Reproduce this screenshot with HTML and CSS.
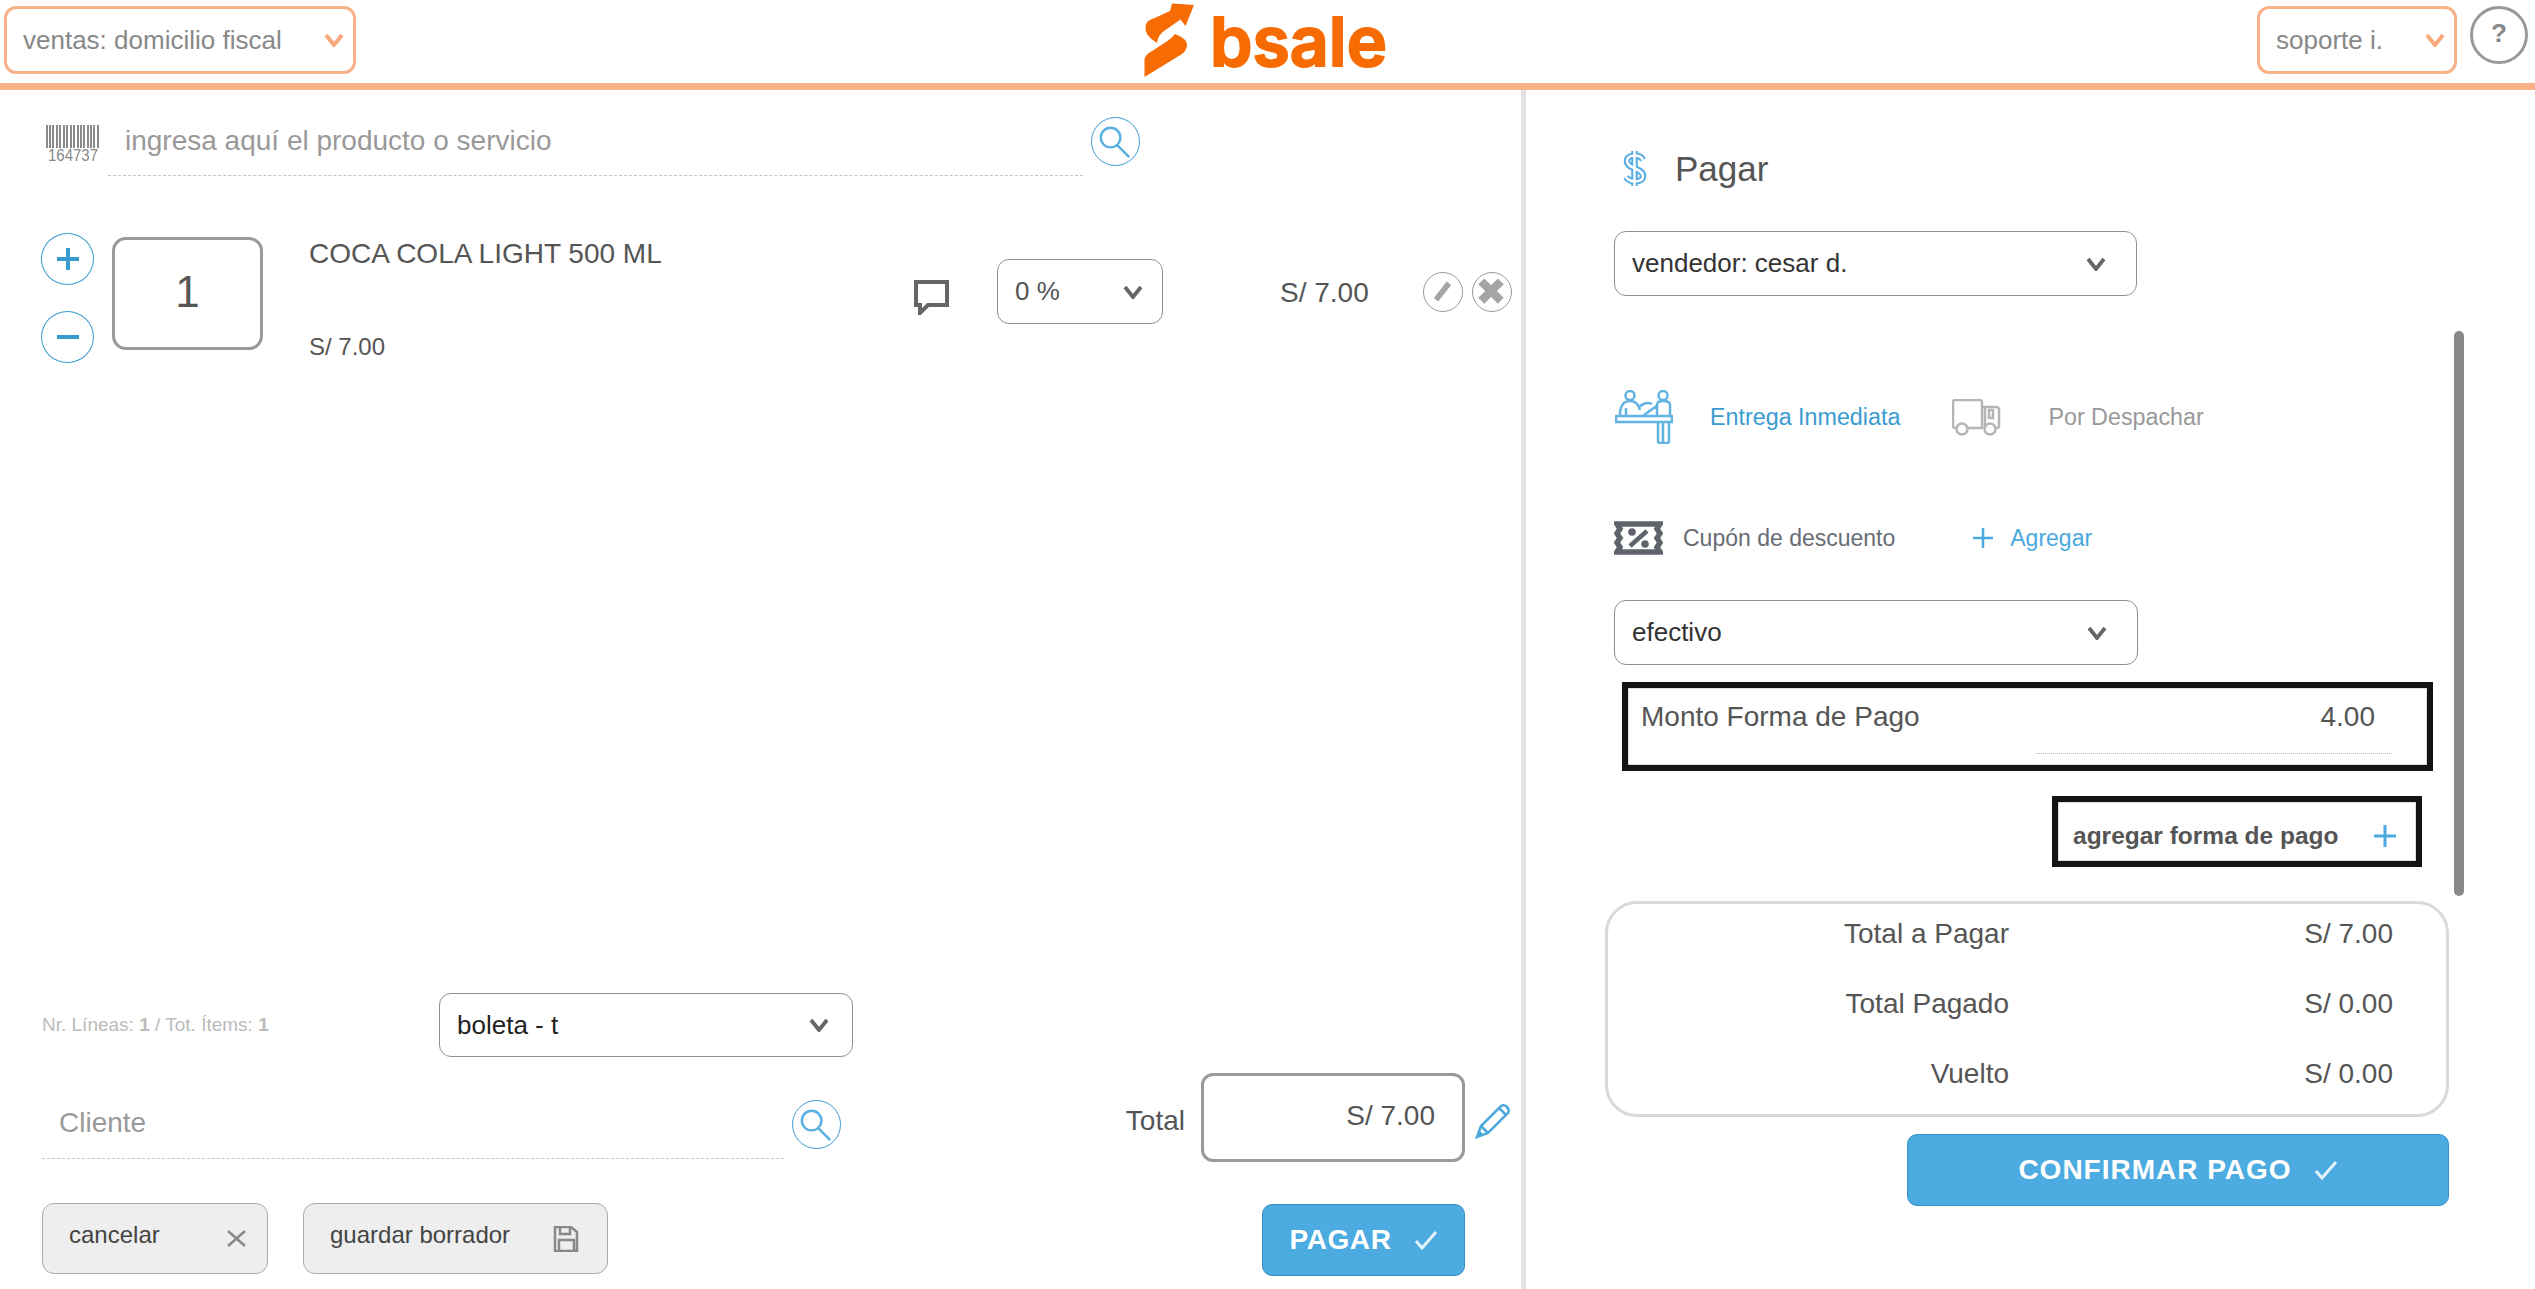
FILE: index.html
```html
<!DOCTYPE html>
<html lang="es">
<head>
    <meta charset="UTF-8">
    <title>bsale - punto de venta</title>
    <link rel="stylesheet" href="styles.css">
</head>
<body>
    <header class="topbar">
        <div class="topbar-left">
            <div class="select select-orange select-sucursal">
                <span>ventas: domicilio fiscal</span>
                <svg class="chevron" viewBox="0 0 20 14"><path d="M2 2l8 10 8-10"/></svg>
            </div>
        </div>
        <div class="logo">
            <svg class="logo-mark" viewBox="0 0 54 78"><path d="M6 20L28 10 30 2.500 52 4 43.500 25 38.500 18.500 22 30Q16 34 15 42 2 34 3.500 26 4 22 6 20Z"/><path d="M33 33Q46 38 45 45 44 50 40 53L2.500 76V58Q3 54 10 50L24 41Q30 37 33 33Z"/></svg>
            <span class="logo-text">bsale</span>
        </div>
        <div class="topbar-right">
            <div class="select select-orange select-soporte">
                <span>soporte i.</span>
                <svg class="chevron" viewBox="0 0 20 14"><path d="M2 2l8 10 8-10"/></svg>
            </div>
            <div class="ayuda">?</div>
        </div>
    </header>

    <main class="main">
        <section class="venta">
            <div class="buscador">
                <svg class="barcode" viewBox="0 0 54 42">
                    <path d="M1 0v23M4 0v23M7 0v23M11 0v23M14 0v23M18 0v23M21 0v23M25 0v23M28 0v23M32 0v23M35 0v23M38 0v23M42 0v23M45 0v23M48 0v23M52 0v23"/>
                    <text x="2" y="36" textLength="50" lengthAdjust="spacingAndGlyphs">164737</text>
                </svg>
                <div class="campo campo-producto">ingresa aquí el producto o servicio</div>
                <div class="btn-lupa">
                    <svg viewBox="0 0 48 48"><circle cx="19" cy="20" r="10"/><path d="M26 28l12 12"/></svg>
                </div>
            </div>

            <div class="item">
                <div class="cantidad-btns">
                    <div class="btn-redondo"><svg viewBox="0 0 24 24"><path d="M12 1v22M1 12h22"/></svg></div>
                    <div class="btn-redondo"><svg viewBox="0 0 24 24"><path d="M1 12h22"/></svg></div>
                </div>
                <div class="cantidad">1</div>
                <div class="item-info">
                    <div class="item-nombre">COCA COLA LIGHT 500 ML</div>
                    <div class="item-precio">S/ 7.00</div>
                </div>
                <svg class="comentario" viewBox="0 0 35 35"><path d="M2 2h31v23H14l-8 8v-8H2z"/></svg>
                <div class="select select-descuento">
                    <span>0 %</span>
                    <svg class="chevron chevron-gris" viewBox="0 0 20 14"><path d="M2 2l8 10 8-10"/></svg>
                </div>
                <div class="item-total">S/ 7.00</div>
                <div class="item-acciones">
                    <div class="btn-accion"><svg viewBox="0 0 40 40"><path class="trazo-lapiz" d="M13 29l14-18"/></svg></div>
                    <div class="btn-accion"><svg viewBox="0 0 40 40"><path class="trazo-x" d="M9 9l21 21M30 9L9 30"/></svg></div>
                </div>
            </div>

            <div class="venta-pie">
                <div class="fila-doc">
                    <div class="resumen-lineas">Nr. Líneas: <b>1</b> / Tot. Ítems: <b>1</b></div>
                    <div class="select select-doc">
                        <span>boleta - t</span>
                        <svg class="chevron chevron-gris" viewBox="0 0 20 14"><path d="M2 2l8 10 8-10"/></svg>
                    </div>
                </div>
                <div class="fila-cliente">
                    <div class="campo campo-cliente">Cliente</div>
                    <div class="btn-lupa btn-lupa-cliente">
                        <svg viewBox="0 0 48 48"><circle cx="19" cy="20" r="10"/><path d="M26 28l12 12"/></svg>
                    </div>
                    <div class="total-label">Total</div>
                    <div class="total-valor">S/ 7.00</div>
                    <svg class="lapiz" viewBox="0 0 36 36">
                        <path class="lapiz-cuerpo" d="M2 34l4-11L26 3q3-2 6 1t1 6L13 30z"/>
                        <path class="lapiz-cuerpo" d="M6 23l7 7M24 5l7 7"/>
                        <path class="lapiz-punta" d="M2 34l2-7 5 5z"/>
                    </svg>
                </div>
                <div class="fila-botones">
                    <div class="btn-gris btn-cancelar">
                        <span>cancelar</span>
                        <svg class="icono-x" viewBox="0 0 19 17"><path d="M1 1l17 15M18 1L1 16"/></svg>
                    </div>
                    <div class="btn-gris btn-borrador">
                        <span>guardar borrador</span>
                        <svg class="icono-guardar" viewBox="0 0 26 26"><path d="M2 1h16l6 5v19H2zM7 1v7h10V1M6 25V14h15v11"/></svg>
                    </div>
                    <div class="btn-azul btn-pagar">
                        <span>PAGAR</span>
                        <svg class="check" viewBox="0 0 24 20"><path d="M2 11l6 7L22 2"/></svg>
                    </div>
                </div>
            </div>
        </section>

        <section class="pago">
            <div class="pago-titulo">
                <svg class="dolar" viewBox="0 0 25 39">
                    <path class="dolar-fuera" d="M12.500 2v35M21 11C18 5 5 5 5 12c0 8 16 7 16 15 0 7-13 7-17 1"/>
                    <path class="dolar-dentro" d="M12.500 2v35M21 11C18 5 5 5 5 12c0 8 16 7 16 15 0 7-13 7-17 1"/>
                </svg>
                <span>Pagar</span>
            </div>

            <div class="select select-pago">
                <span>vendedor: cesar d.</span>
                <svg class="chevron chevron-gris" viewBox="0 0 20 14"><path d="M2 2l8 10 8-10"/></svg>
            </div>

            <div class="entrega">
                <svg class="icono-entrega" viewBox="0 0 58 54">
                    <circle cx="15" cy="5.500" r="4.500"/>
                    <circle cx="48" cy="5.500" r="4.500"/>
                    <path d="M5 25c0-8 3-14 10-14s9 5 10 9M11 25v-7M1 26h56v6H1zM42 26V15c0-3 2-4 6-4s7 1 7 4v11M29 25l14-10M25 17c2-4 9-5 12-3M43 32v19c0 3 5 3 5 0V32M48 51c0 3 6 3 6 0V32"/>
                </svg>
                <span class="entrega-activa">Entrega Inmediata</span>
                <svg class="icono-camion" viewBox="0 0 49 37">
                    <path d="M5 29H3c-1 0-2-1-2-2V3c0-1 1-2 2-2h24c2 0 3 1 3 2v26H15M31 8h13c2 0 3 1 3 3v16c0 1-1 2-2 2h-2M33 29v-21M41 11v8h-4v-8z"/>
                    <circle cx="10" cy="30" r="5.500"/>
                    <circle cx="38" cy="30" r="5.500"/>
                </svg>
                <span class="entrega-inactiva">Por Despachar</span>
            </div>

            <div class="cupon">
                <svg class="icono-cupon" viewBox="0 0 49 34">
                    <path class="cupon-borde" d="M3 3h43l-3 4.700 3 4.700-3 4.600 3 4.600-3 4.700 3 4.700H3l3-4.700-3-4.700 3-4.600-3-4.600 3-4.700z"/>
                    <path class="cupon-signo" d="M33 10L16 25"/>
                    <circle cx="18" cy="11" r="3.800"/>
                    <circle cx="31" cy="23" r="3.800"/>
                </svg>
                <span class="cupon-texto">Cupón de descuento</span>
                <svg class="mas mas-cupon" viewBox="0 0 20 20"><path d="M10 0v20M0 10h20"/></svg>
                <span class="cupon-agregar">Agregar</span>
            </div>

            <div class="select select-pago select-forma">
                <span>efectivo</span>
                <svg class="chevron chevron-gris" viewBox="0 0 20 14"><path d="M2 2l8 10 8-10"/></svg>
            </div>

            <div class="monto">
                <div class="monto-label">Monto Forma de Pago</div>
                <div class="monto-valor">4.00</div>
            </div>

            <div class="agregar-forma">
                <span>agregar forma de pago</span>
                <svg class="mas mas-forma" viewBox="0 0 22 22"><path d="M11 0v22M0 11h22"/></svg>
            </div>

            <div class="totales">
                <div class="totales-fila"><span>Total a Pagar</span><span class="totales-monto">S/ 7.00</span></div>
                <div class="totales-fila"><span>Total Pagado</span><span class="totales-monto">S/ 0.00</span></div>
                <div class="totales-fila"><span>Vuelto</span><span class="totales-monto">S/ 0.00</span></div>
            </div>

            <div class="btn-azul btn-confirmar">
                <span>CONFIRMAR PAGO</span>
                <svg class="check" viewBox="0 0 24 20"><path d="M2 11l6 7L22 2"/></svg>
            </div>

            <div class="scroll-thumb"></div>
        </section>
    </main>
</body>
</html>
```

FILE: styles.css
```css
* {
    box-sizing: border-box;
}
html, body {
    margin: 0;
    height: 1289px;
    overflow: hidden;
    background: #fff;
}
body {
    font-family: "Liberation Sans", Arial, sans-serif;
    color: #555;
}
svg {
    display: block;
    flex-shrink: 0;
}

/* barra superior */
.topbar {
    display: grid;
    grid-template-columns: 1138px 1fr auto;
    height: 90px;
    padding: 0 7px 0 4px;
    border-bottom: 7px solid #f9b187;
}
.topbar-left, .topbar-right {
    display: flex;
    padding-top: 6px;
}
.topbar-right {
    gap: 13px;
}
.logo {
    display: flex;
    align-items: flex-start;
    gap: 14px;
    padding-top: 1px;
    color: #f76b03;
}
.logo-mark {
    width: 54px;
    height: 78px;
    fill: #f76b03;
}
.logo-text {
    margin-top: 6px;
    font-family: Inter, sans-serif;
    font-weight: 600;
    font-size: 68px;
    line-height: 68px;
    -webkit-text-stroke: 2px #f76b03;
}
.ayuda {
    width: 58px;
    height: 58px;
    border: 3px solid #999;
    border-radius: 50%;
    font-size: 26px;
    font-weight: 700;
    line-height: 48px;
    text-align: center;
    color: #888;
}

/* selects */
.select {
    display: flex;
    align-items: center;
    justify-content: space-between;
    height: 65px;
    padding: 0 19px 0 17px;
    border: 1px solid #909090;
    border-radius: 12px;
    font-size: 26px;
    color: #333;
}
.select-orange {
    height: 68px;
    border: 3px solid #f9b187;
    color: #888;
    padding: 0 9px 0 16px;
}
.select-sucursal {
    width: 352px;
}
.select-soporte {
    width: 200px;
}
.chevron {
    width: 20px;
    height: 14px;
    fill: none;
    stroke: #f9a97b;
    stroke-width: 4;
}
.chevron-gris {
    stroke: #666;
    stroke-width: 3.800;
}
.select-descuento {
    width: 166px;
    margin: 26px 0 0 48px;
    color: #555;
}
.select-doc {
    width: 414px;
    height: 64px;
    color: #222;
    padding-right: 23px;
}
.select-pago {
    width: 523px;
    margin-top: 42px;
    padding-right: 30px;
}
.select-forma {
    width: 524px;
    margin-top: 45px;
}

/* columnas */
.main {
    display: flex;
    height: 1199px;
}
.venta {
    display: flex;
    flex-direction: column;
    width: 1526px;
    border-right: 5px solid #e2e2e4;
}
.pago {
    position: relative;
    flex: 1;
    padding: 57px 0 0 88px;
}

/* buscador */
.buscador {
    display: flex;
    margin-top: 27px;
    padding-left: 46px;
}
.barcode {
    width: 54px;
    height: 42px;
    margin: 8px 8px 0 0;
    fill: #888;
    stroke: #8a8a8a;
    stroke-width: 2;
}
.barcode text {
    font-size: 16px;
    stroke: none;
    font-family: "Liberation Sans", sans-serif;
    fill: #888;
}
.campo {
    height: 59px;
    border-bottom: 1px dashed #c4c4c4;
    font-size: 28px;
    color: #999;
}
.campo-producto {
    width: 975px;
    padding: 7px 0 0 17px;
    line-height: 34px;
}
.campo-cliente {
    width: 742px;
    margin-top: 27px;
    padding-left: 17px;
    line-height: 46px;
}
.btn-lupa {
    width: 49px;
    height: 49px;
    margin-left: 8px;
    border: 1px solid #3a9bd0;
    border-radius: 50%;
}
.btn-lupa svg {
    width: 47px;
    height: 47px;
    fill: none;
    stroke: #5ab0e0;
    stroke-width: 2.500;
}
.btn-lupa-cliente {
    margin-top: 27px;
}

/* linea de producto */
.item {
    display: flex;
    align-items: flex-start;
    margin-top: 57px;
    padding-left: 41px;
}
.cantidad-btns {
    display: flex;
    flex-direction: column;
    gap: 26px;
}
.btn-redondo {
    display: flex;
    align-items: center;
    justify-content: center;
    width: 53px;
    height: 52px;
    border: 1px solid #3a9bd0;
    border-radius: 50%;
}
.btn-redondo svg {
    width: 24px;
    height: 24px;
    fill: none;
    stroke: #3a9bd0;
    stroke-width: 4;
}
.cantidad {
    width: 151px;
    height: 113px;
    margin: 4px 0 0 18px;
    border: 3px solid #999;
    border-radius: 14px;
    font-size: 44px;
    line-height: 104px;
    text-align: center;
}
.item-info {
    width: 605px;
    margin: 4px 0 0 46px;
}
.item-nombre {
    font-size: 28px;
    line-height: 34px;
}
.item-precio {
    margin-top: 62px;
    font-size: 24px;
    line-height: 28px;
}
.comentario {
    width: 35px;
    height: 35px;
    margin-top: 47px;
    fill: none;
    stroke: #666;
    stroke-width: 4;
}
.item-total {
    margin: 45px 0 0 117px;
    font-size: 28px;
    line-height: 30px;
}
.item-acciones {
    display: flex;
    gap: 9px;
    margin: 39px 0 0 54px;
}
.btn-accion {
    width: 40px;
    height: 40px;
    border: 1.500px solid #999;
    border-radius: 50%;
}
.btn-accion svg {
    width: 37px;
    height: 37px;
    fill: none;
    stroke: #a5a5a5;
}
.trazo-lapiz {
    stroke-width: 6;
}
.trazo-x {
    stroke-width: 9;
}

/* pie de la venta */
.venta-pie {
    margin-top: auto;
    padding: 0 10px 13px 42px;
}
.fila-doc {
    display: flex;
    align-items: center;
}
.resumen-lineas {
    width: 397px;
    font-size: 19px;
    color: #bbb;
}
.fila-cliente {
    display: flex;
    align-items: flex-start;
    margin-top: 16px;
}
.total-label {
    margin: 31px 16px 0 auto;
    font-size: 28px;
    line-height: 34px;
}
.total-valor {
    width: 264px;
    height: 89px;
    padding: 0 27px 8px 0;
    border: 3px solid #999;
    border-radius: 12px;
    font-size: 28px;
    line-height: 80px;
    text-align: right;
}
.lapiz {
    width: 36px;
    height: 36px;
    margin: 30px 0 0 10px;
}
.lapiz-cuerpo {
    fill: none;
    stroke: #4da9dd;
    stroke-width: 2.500;
}
.lapiz-punta {
    fill: #4da9dd;
}
.fila-botones {
    display: flex;
    align-items: flex-start;
    gap: 35px;
    margin-top: 41px;
}
.btn-gris {
    display: flex;
    align-items: center;
    justify-content: space-between;
    height: 71px;
    padding: 0 21px 0 26px;
    background: #eee;
    border: 1.500px solid #aaa;
    border-radius: 12px;
    font-size: 24px;
    color: #444;
}
.btn-gris span {
    padding-bottom: 8px;
}
.btn-cancelar {
    width: 226px;
}
.btn-borrador {
    width: 305px;
    padding-right: 28px;
}
.icono-x {
    width: 19px;
    height: 17px;
    fill: none;
    stroke: #888;
    stroke-width: 2.500;
}
.icono-guardar {
    width: 26px;
    height: 26px;
    fill: none;
    stroke: #888;
    stroke-width: 2.500;
}
.btn-azul {
    display: flex;
    align-items: center;
    justify-content: center;
    gap: 22px;
    height: 72px;
    background: #4cabe0;
    border: 1px solid #3a8fc8;
    border-radius: 10px;
    font-size: 28px;
    font-weight: 700;
    color: #fff;
}
.btn-pagar {
    width: 203px;
    margin: 1px 46px 0 auto;
    letter-spacing: .6px;
}
.check {
    width: 24px;
    height: 20px;
    fill: none;
    stroke: #e4f3fb;
    stroke-width: 3;
}

/* columna de pago */
.pago-titulo {
    display: flex;
    align-items: center;
    gap: 28px;
    padding-left: 8px;
    font-size: 35px;
    line-height: 40px;
}
.pago-titulo span {
    padding-top: 2px;
}
.dolar {
    width: 25px;
    height: 39px;
    fill: none;
}
.dolar-fuera {
    stroke: #55ade0;
    stroke-width: 6.500;
}
.dolar-dentro {
    stroke: #fff;
    stroke-width: 2.500;
}
.entrega {
    display: flex;
    align-items: center;
    margin: 94px 0 0 1px;
    font-size: 23.300px;
}
.icono-entrega {
    width: 58px;
    height: 54px;
    fill: none;
    stroke: #62b2e2;
    stroke-width: 2.500;
}
.entrega-activa {
    margin-left: 37px;
    color: #3a9bd0;
}
.icono-camion {
    width: 49px;
    height: 37px;
    margin-left: 52px;
    fill: none;
    stroke: #b5b5b5;
    stroke-width: 2.500;
}
.entrega-inactiva {
    margin-left: 47px;
    color: #999;
}
.cupon {
    display: flex;
    align-items: center;
    margin-top: 77px;
    font-size: 23px;
}
.icono-cupon {
    width: 49px;
    height: 34px;
    fill: #5f646c;
}
.cupon-borde {
    fill: #fff;
    stroke: #5f646c;
    stroke-width: 5.500;
}
.cupon-signo {
    stroke: #5f646c;
    stroke-width: 4.500;
}
.cupon-texto {
    margin-left: 20px;
    color: #666c74;
}
.mas {
    fill: none;
    stroke: #4aa9df;
    stroke-width: 2.500;
}
.mas-cupon {
    width: 20px;
    height: 20px;
    margin-left: 78px;
}
.cupon-agregar {
    margin-left: 17px;
    color: #4aa9df;
}
.monto {
    display: flex;
    align-items: flex-start;
    justify-content: space-between;
    width: 811px;
    height: 89px;
    margin: 17px 0 0 8px;
    padding: 12px 35px 0 13px;
    border: 6px solid #141414;
    box-shadow: inset 0 0 0 1px #ddd;
    font-size: 28px;
    line-height: 34px;
}
.monto-valor {
    width: 356px;
    height: 54px;
    padding-right: 17px;
    border-bottom: 1px dotted #bbb;
    text-align: right;
}
.agregar-forma {
    display: flex;
    align-items: center;
    justify-content: space-between;
    width: 370px;
    height: 71px;
    margin: 25px 0 0 438px;
    padding: 8px 20px 0 15px;
    border: 6px solid #141414;
    box-shadow: inset 0 0 0 1px #ddd;
    font-size: 24.500px;
    font-weight: 700;
}
.mas-forma {
    width: 22px;
    height: 22px;
    stroke-width: 3;
}
.totales {
    display: grid;
    grid-auto-rows: 60px;
    gap: 10px;
    width: 844px;
    height: 216px;
    margin: 34px 0 0 -9px;
    border: 3px solid #d9d9d9;
    border-radius: 32px;
    font-size: 28px;
}
.totales-fila {
    display: grid;
    grid-template-columns: 401px 1fr;
    align-items: center;
    padding-right: 53px;
    text-align: right;
}
.btn-confirmar {
    width: 542px;
    margin: 17px 0 0 293px;
    letter-spacing: 1px;
}
.scroll-thumb {
    position: absolute;
    top: 241px;
    left: 928px;
    width: 10px;
    height: 565px;
    background: #888;
    border-radius: 5px;
}
```
